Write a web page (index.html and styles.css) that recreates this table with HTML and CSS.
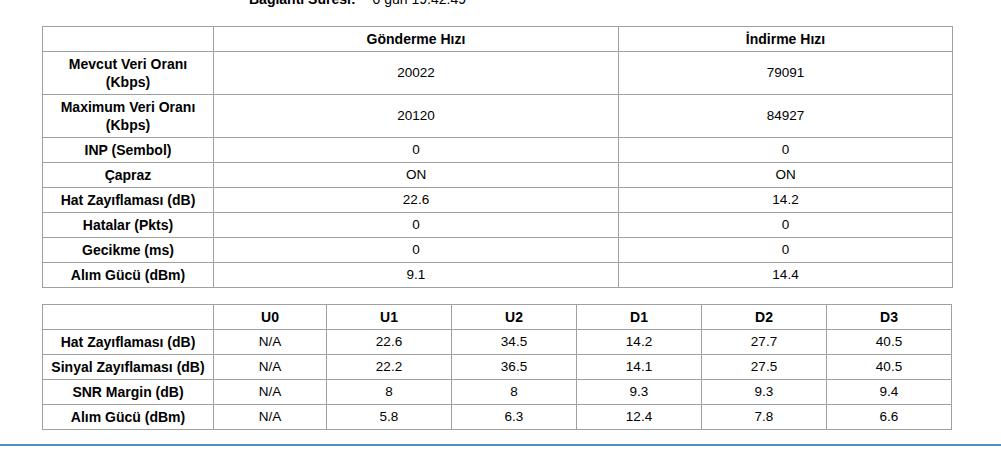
FILE: index.html
```html
<!DOCTYPE html>
<html lang="tr">
<head>
<meta charset="utf-8">
<title>DSL</title>
<link rel="stylesheet" href="styles.css">
</head>
<body>
<div class="page">
  <div class="conn">
    <span class="conn-label">Bağlantı Süresi:</span>
    <span class="conn-value">0 gün 19:42:49</span>
  </div>

  <table class="grid grid-rates">
    <thead>
      <tr>
        <th class="c-label"></th>
        <th class="c-up">Gönderme Hızı</th>
        <th class="c-down">İndirme Hızı</th>
      </tr>
    </thead>
    <tbody>
      <tr><th>Mevcut Veri Oranı<br>(Kbps)</th><td>20022</td><td>79091</td></tr>
      <tr><th>Maximum Veri Oranı<br>(Kbps)</th><td>20120</td><td>84927</td></tr>
      <tr><th>INP (Sembol)</th><td>0</td><td>0</td></tr>
      <tr><th>Çapraz</th><td>ON</td><td>ON</td></tr>
      <tr><th>Hat Zayıflaması (dB)</th><td>22.6</td><td>14.2</td></tr>
      <tr><th>Hatalar (Pkts)</th><td>0</td><td>0</td></tr>
      <tr><th>Gecikme (ms)</th><td>0</td><td>0</td></tr>
      <tr><th>Alım Gücü (dBm)</th><td>9.1</td><td>14.4</td></tr>
    </tbody>
  </table>

  <table class="grid grid-bands">
    <thead>
      <tr>
        <th class="b-label"></th>
        <th class="b-u0">U0</th>
        <th class="b-col">U1</th>
        <th class="b-col">U2</th>
        <th class="b-col">D1</th>
        <th class="b-col">D2</th>
        <th class="b-col">D3</th>
      </tr>
    </thead>
    <tbody>
      <tr><th>Hat Zayıflaması (dB)</th><td>N/A</td><td>22.6</td><td>34.5</td><td>14.2</td><td>27.7</td><td>40.5</td></tr>
      <tr><th>Sinyal Zayıflaması (dB)</th><td>N/A</td><td>22.2</td><td>36.5</td><td>14.1</td><td>27.5</td><td>40.5</td></tr>
      <tr><th>SNR Margin (dB)</th><td>N/A</td><td>8</td><td>8</td><td>9.3</td><td>9.3</td><td>9.4</td></tr>
      <tr><th>Alım Gücü (dBm)</th><td>N/A</td><td>5.8</td><td>6.3</td><td>12.4</td><td>7.8</td><td>6.6</td></tr>
    </tbody>
  </table>

  <div class="rule"></div>
</div>
</body>
</html>
```

FILE: styles.css
```css
html, body {
  margin: 0;
  padding: 0;
  background: #ffffff;
}

body {
  font-family: "Liberation Sans", Arial, sans-serif;
  font-size: 13px;
  color: #000000;
}

.page {
  display: flex;
  flex-direction: column;
  overflow: hidden;
}

.conn {
  display: flex;
  gap: 17px;
  margin-top: -9px;
  margin-left: 249px;
  height: 16px;
  line-height: 16px;
  font-size: 14px;
}

.conn-label {
  font-weight: bold;
}

.grid {
  border-collapse: collapse;
  width: 910px;
  margin-left: 42px;
  table-layout: fixed;
}

.grid th,
.grid td {
  box-sizing: border-box;
  border: 1px solid #a0a0a0;
  text-align: center;
  vertical-align: middle;
  padding: 3px 4px;
  line-height: 18px;
  font-size: 13.5px;
}

.grid th {
  font-weight: bold;
  font-size: 14px;
}

.grid-rates {
  margin-top: 19px;
}

.c-label { width: 171px; }
.c-up { width: 405px; }
.c-down { width: 334px; }

.grid-bands {
  margin-top: 16px;
}

.b-label { width: 171px; }
.b-u0 { width: 113px; }
.b-col { width: 125px; }

.rule {
  margin-top: 14px;
  height: 2px;
  background: #4a8fcb;
  width: 100%;
}
```
